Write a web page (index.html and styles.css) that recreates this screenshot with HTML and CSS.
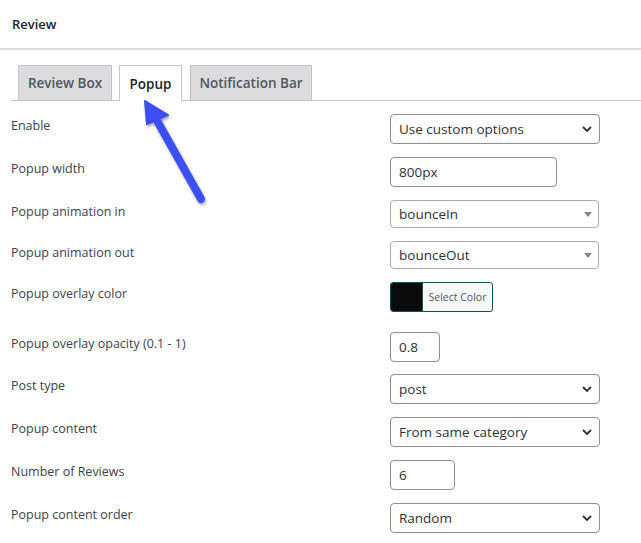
FILE: index.html
```html
<!DOCTYPE html>
<html lang="en">
<head>
<meta charset="utf-8">
<title>Review</title>
<link rel="stylesheet" href="styles.css">
</head>
<body>
<div class="page">
  <header class="header">Review</header>
  <nav class="tabs">
    <span class="tab t1">Review Box</span>
    <span class="tab t2 active">Popup</span>
    <span class="tab t3">Notification Bar</span>
  </nav>
  <div class="form">
    <div class="row">
      <div class="label">Enable</div>
      <div class="select wide"><span>Use custom options</span><svg class="chev" width="10" height="6" viewBox="0 0 10 6"><path d="M1 1 L5 5 L9 1" fill="none" stroke="#2c3338" stroke-width="1.8"/></svg></div>
    </div>
    <div class="row">
      <div class="label">Popup width</div>
      <div class="input w167">800px</div>
    </div>
    <div class="row">
      <div class="label">Popup animation in</div>
      <div class="select2"><span>bounceIn</span><svg class="tri" width="8" height="5" viewBox="0 0 8 5"><path d="M0 0 H8 L4 5 Z" fill="#888"/></svg></div>
    </div>
    <div class="row">
      <div class="label">Popup animation out</div>
      <div class="select2"><span>bounceOut</span><svg class="tri" width="8" height="5" viewBox="0 0 8 5"><path d="M0 0 H8 L4 5 Z" fill="#888"/></svg></div>
    </div>
    <div class="row color-row">
      <div class="label">Popup overlay color</div>
      <div class="color"><span class="swatch"></span><span class="color-text">Select Color</span></div>
    </div>
    <div class="row opacity-row">
      <div class="label">Popup overlay opacity (0.1 - 1)</div>
      <div class="input w50">0.8</div>
    </div>
    <div class="row">
      <div class="label">Post type</div>
      <div class="select wide"><span>post</span><svg class="chev" width="10" height="6" viewBox="0 0 10 6"><path d="M1 1 L5 5 L9 1" fill="none" stroke="#2c3338" stroke-width="1.8"/></svg></div>
    </div>
    <div class="row">
      <div class="label">Popup content</div>
      <div class="select wide"><span>From same category</span><svg class="chev" width="10" height="6" viewBox="0 0 10 6"><path d="M1 1 L5 5 L9 1" fill="none" stroke="#2c3338" stroke-width="1.8"/></svg></div>
    </div>
    <div class="row">
      <div class="label">Number of Reviews</div>
      <div class="input w65">6</div>
    </div>
    <div class="row">
      <div class="label">Popup content order</div>
      <div class="select wide"><span>Random</span><svg class="chev" width="10" height="6" viewBox="0 0 10 6"><path d="M1 1 L5 5 L9 1" fill="none" stroke="#2c3338" stroke-width="1.8"/></svg></div>
    </div>
  </div>
  <svg class="pointer" width="641" height="543" viewBox="0 0 641 543">
    <defs>
      <filter id="sh" x="-20%" y="-20%" width="140%" height="140%">
        <feDropShadow dx="1" dy="2" stdDeviation="1.5" flood-color="#000" flood-opacity="0.35"/>
      </filter>
    </defs>
    <g filter="url(#sh)" fill="#3b4ff2" stroke="#3b4ff2">
      <line x1="155" y1="117" x2="201" y2="199" stroke-width="8" stroke-linecap="round"/>
      <polygon points="145,101 168,115 147,124" stroke-width="2" stroke-linejoin="round"/>
    </g>
  </svg>
</div>
</body>
</html>
```

FILE: styles.css
```css
html, body {
  margin: 0;
  padding: 0;
  background: #fff;
}
body {
  font-family: "Open Sans", "Noto Sans", "Liberation Sans", sans-serif;
  color: #3c434a;
}
.page {
  position: relative;
  width: 641px;
  height: 543px;
  overflow: hidden;
}
.header {
  box-sizing: border-box;
  height: 50px;
  padding: 14px 12px 0;
  font-size: 13px;
  line-height: 20px;
  font-weight: 600;
  color: #1d2327;
  border-bottom: 2px solid #dcdcde;
}
.tabs {
  display: flex;
  gap: 7px;
  margin: 15px 0 0 11px;
  padding-left: 7px;
  border-bottom: 1px solid #c3c4c7;
  height: 35px;
}
.tab {
  box-sizing: border-box;
  height: 35px;
  display: flex;
  align-items: center;
  justify-content: center;
  font-size: 13.5px;
  font-weight: 600;
  color: #50575e;
  background: #dcdcde;
  border: 1px solid #c3c4c7;
  border-bottom: none;
}
.t1 { width: 94px; }
.t2 { width: 63px; }
.t3 { width: 122px; margin-left: 1px; }
.tab.active {
  height: 36px;
  background: #fff;
  color: #1d2327;
}
.form {
  display: flex;
  flex-direction: column;
  gap: 13px;
  padding: 13px 0 0 11px;
}
.row {
  display: flex;
  align-items: flex-start;
}
.color-row {
  margin-bottom: 7px;
}
.opacity-row {
  margin-bottom: -1px;
}
.label {
  width: 379px;
  flex: none;
  padding-top: 3px;
  font-size: 12.5px;
  line-height: 18px;
  color: #3c434a;
}
.select, .input, .select2 {
  box-sizing: border-box;
  display: flex;
  align-items: center;
  height: 30px;
  border: 1px solid #8c8f94;
  border-radius: 4px;
  font-size: 13.5px;
  color: #2c3338;
  background: #fff;
}
.select {
  width: 210px;
  padding: 0 7px 0 8px;
}
.select span, .select2 span {
  flex: 1;
}
.select2 {
  width: 209px;
  height: 28px;
  border-color: #aaa;
  padding: 0 6px 0 8px;
}
.input {
  padding: 0 8px;
}
.w167 { width: 167px; }
.w50 { width: 50px; }
.w65 { width: 65px; }
.color {
  box-sizing: border-box;
  display: flex;
  width: 103px;
  height: 30px;
  border: 1px solid #1d4b5e;
  border-radius: 3px;
  overflow: hidden;
  background: #f6f7f7;
}
.swatch {
  width: 31px;
  background: #0b0b0b;
}
.color-text {
  flex: 1;
  display: flex;
  align-items: center;
  justify-content: center;
  font-size: 10.5px;
  color: #50575e;
  border-left: 1px solid #1d4b5e;
}
.pointer {
  position: absolute;
  left: 0;
  top: 0;
  pointer-events: none;
}
```
